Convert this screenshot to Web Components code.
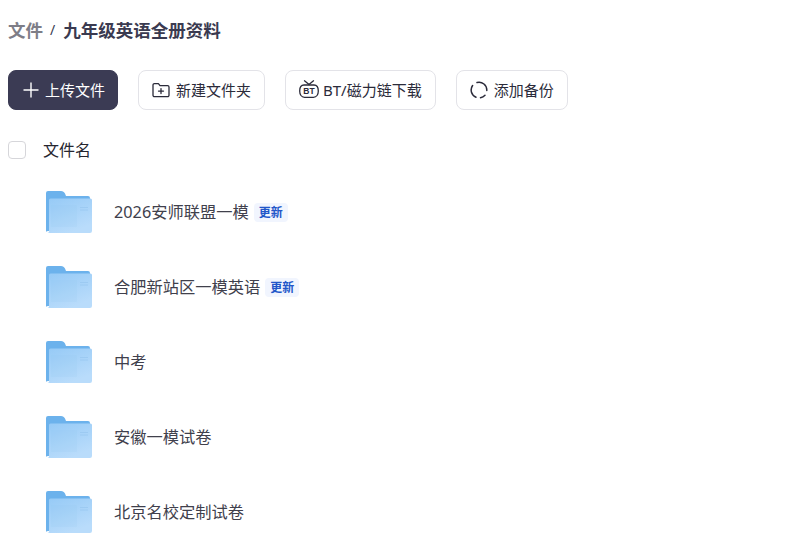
<!DOCTYPE html>
<html lang="zh">
<head>
<meta charset="utf-8">
<title>文件</title>
<style>
  html, body { margin: 0; height: 100%; overflow: hidden; background: #fff; }
  body { font-family: "Noto Sans", "Noto Sans CJK SC", sans-serif; }
</style>
</head>
<body>
<file-page>
  <file-crumbs slot="crumbs" root="文件" current="九年级英语全册资料"></file-crumbs>
  <file-button slot="actions" primary icon="plus">上传文件</file-button>
  <file-button slot="actions" icon="folder">新建文件夹</file-button>
  <file-button slot="actions" icon="bt">BT/磁力链下载</file-button>
  <file-button slot="actions" icon="sync">添加备份</file-button>
  <file-head slot="head">文件名</file-head>
  <file-row name="2026安师联盟一模" badge="更新"></file-row>
  <file-row name="合肥新站区一模英语" badge="更新"></file-row>
  <file-row name="中考"></file-row>
  <file-row name="安徽一模试卷"></file-row>
  <file-row name="北京名校定制试卷"></file-row>
</file-page>
<script>
const ICONS = {
  plus: `<svg width="16" height="16" viewBox="0 0 16 16" fill="none" stroke="currentColor" stroke-width="1.4"><path d="M8 .5v15M.5 8h15"/></svg>`,
  folder: `<svg width="18" height="16" viewBox="0 0 18 16" fill="none" stroke="currentColor" stroke-width="1.3" stroke-linejoin="round" stroke-linecap="round"><path d="M1 3a1.4 1.4 0 0 1 1.4-1.4h4l1.6 2h7.600A1.400 1.400 0 0 1 17 5v8.200a1.400 1.400 0 0 1-1.400 1.400H2.400A1.400 1.400 0 0 1 1 13.200z"/><path d="M9 6.600v5M6.500 9.100h5"/></svg>`,
  bt: `<svg width="20" height="20" viewBox="0 0 20 20" fill="none" stroke="currentColor" stroke-width="1.3" stroke-linecap="round" stroke-linejoin="round"><path d="M5.500 .8L10 4.500 14.500 .8"/><path d="M5 5h10c2.800 0 4.300 2.600 4.300 6s-1.800 6.300-4.800 6.300h-9C2.500 17.300.7 14.500.7 11S2.200 5 5 5z"/><text x="10" y="14.300" text-anchor="middle" font-family="'Liberation Sans', sans-serif" font-size="8.500" font-weight="700" fill="currentColor" stroke="none">BT</text></svg>`,
  sync: `<svg width="18" height="18" viewBox="0 0 18 18" fill="none" stroke="currentColor" stroke-width="1.5" stroke-linecap="round"><path d="M7 1.500A7.800 7.800 0 0 1 16.800 9.500"/><path d="M15 14.200A7.800 7.800 0 0 1 10.500 16.700"/><path d="M2.600 4.500A7.800 7.800 0 0 0 6 16.200"/></svg>`
};

class FilePage extends HTMLElement {
  constructor() {
    super();
    const root = this.attachShadow({ mode: 'open' });
    root.innerHTML = `
    <style>
      :host { display: block; padding: 16px 8px 0; }
      .actions { display: flex; gap: 20px; margin-top: 27px; }
      .list { display: flex; flex-direction: column; margin-top: 4px; }
    </style>
    <slot name="crumbs"></slot>
    <div class="actions"><slot name="actions"></slot></div>
    <slot name="head"></slot>
    <div class="list"><slot></slot></div>`;
  }
}

class FileCrumbs extends HTMLElement {
  constructor() {
    super();
    const root = this.attachShadow({ mode: 'open' });
    root.innerHTML = `
    <style>
      :host { display: flex; align-items: center; height: 27px; font-size: 17.500px; font-weight: 700; color: #3a3a50; }
      .root { color: #7d7d87; }
      .sep { font-size: 14px; font-weight: 400; margin: 0 8px 0 7px; color: #3a3a50; }
    </style>
    <span class="root"></span><span class="sep">/</span><span class="current"></span>`;
    root.querySelector('.root').textContent = this.getAttribute('root');
    root.querySelector('.current').textContent = this.getAttribute('current');
  }
}

class FileButton extends HTMLElement {
  constructor() {
    super();
    const root = this.attachShadow({ mode: 'open' });
    root.innerHTML = `
    <style>
      :host { display: inline-flex; align-items: center; height: 40px; box-sizing: border-box; padding: 0 13px; gap: 6px; border: 1px solid #e3e3e8; border-radius: 8px; font-size: 15px; color: #2b2b3a; background: #fff; white-space: nowrap; }
      :host([primary]) { background: #3b3b54; border-color: #3b3b54; color: #fff; padding: 0 12px 0 14px; }
      :host([icon="bt"]) { gap: 4px; }
      .icon { display: flex; align-items: center; }
      .label { padding-bottom: 2px; }
    </style>
    <span class="icon">${ICONS[this.getAttribute('icon')]}</span><span class="label"><slot></slot></span>`;
  }
}

class FileHead extends HTMLElement {
  constructor() {
    super();
    const root = this.attachShadow({ mode: 'open' });
    root.innerHTML = `
    <style>
      :host { display: flex; align-items: center; gap: 17px; height: 40px; margin-top: 20px; font-size: 16px; color: #26262f; }
      .box { width: 18px; height: 18px; box-sizing: border-box; border: 1px solid #d6d6da; border-radius: 4px; background: #fff; }
      .label { padding-bottom: 2px; }
    </style>
    <span class="box"></span><span class="label"><slot></slot></span>`;
  }
}

class FileRow extends HTMLElement {
  constructor() {
    super();
    const root = this.attachShadow({ mode: 'open' });
    const badge = this.getAttribute('badge');
    root.innerHTML = `
    <style>
      :host { display: flex; align-items: center; height: 75px; padding-left: 38px; font-size: 16.250px; color: #40404c; }
      svg { display: block; flex: none; margin-right: 22px; }
      .name { padding-bottom: 2px; }
      .badge { margin: 2px 0 0 5px; padding: 0 5px; height: 19px; line-height: 19px; border-radius: 4px; background: #f1f5fe; color: #2257c9; font-size: 12px; font-weight: 700; }
    </style>
    <svg width="46" height="42" viewBox="0 0 46 42">
      <defs>
        <linearGradient id="f" x1="0" y1="0" x2="0.500" y2="1"><stop offset="0" stop-color="#96caf6"/><stop offset="1" stop-color="#b9dcfb"/></linearGradient>
      </defs>
      <path d="M0 2a2 2 0 0 1 2-2h13c2 0 3 1 4 2.500L20 5h22a2 2 0 0 1 2 2v33H1.500A1.500 1.500 0 0 1 0 40.500z" fill="#6cb2ec"/>
      <path d="M3 9a1.500 1.500 0 0 1 1.500-1.500H44.500A1.500 1.500 0 0 1 46 9v31a2 2 0 0 1-2 2H1.500C2.500 42 3 41 3 40z" fill="url(#f)"/>
      <rect x="5" y="14" width="26" height="22" rx="1" fill="#8fc4f2" opacity=".12"/>
      <path d="M34 16.500h8M34 19h8" stroke="#9ccaf2" stroke-width="1"/>
    </svg>
    <span class="name"></span>${badge ? `<span class="badge">${badge}</span>` : ''}`;
    root.querySelector('.name').textContent = this.getAttribute('name');
  }
}

customElements.define('file-page', FilePage);
customElements.define('file-crumbs', FileCrumbs);
customElements.define('file-button', FileButton);
customElements.define('file-head', FileHead);
customElements.define('file-row', FileRow);
</script>
</body>
</html>
